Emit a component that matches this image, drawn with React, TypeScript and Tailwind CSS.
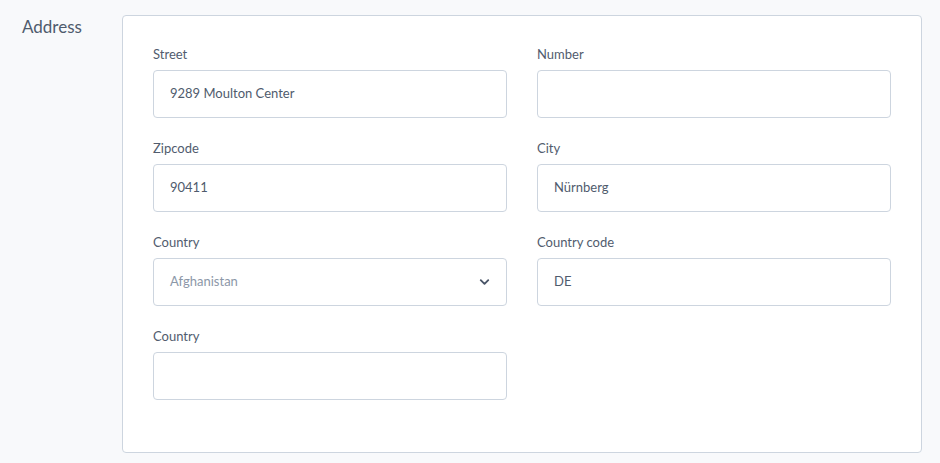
import { ChevronDown } from 'lucide-react';

function Field({ label, value, select }: { label: string; value?: string; select?: boolean }) {
  return (
    <div className="flex flex-col">
      <label className="h-5 text-[13px] leading-5 text-[#515c6e] mb-1.5">{label}</label>
      <div className="relative flex h-12 items-center rounded-[4px] border border-[#cdd5df] bg-white px-4">
        {select ? (
          <>
            <span className="text-[13px] text-[#8c97a8]">{value}</span>
            <ChevronDown className="absolute right-3.5 top-1/2 -translate-y-1/2 text-[#4a5568]" size={15} strokeWidth={3} />
          </>
        ) : (
          <span className="text-[13px] text-[#4f5b6d]">{value}</span>
        )}
      </div>
    </div>
  );
}

export default function App() {
  return (
    <div className="min-h-screen bg-[#f8f9fb] pt-[15px] pl-[22px] pr-[18px] font-['Lato','Noto_Sans',sans-serif]">
      <div className="flex">
        <h2 className="w-[100px] pt-[2px] text-[17px] leading-5 text-[#4f5b6d]">Address</h2>
        <div className="flex-1 rounded-[4px] border border-[#cdd5df] bg-white px-[30px] pt-[28px] pb-[52px]">
          <div className="grid grid-cols-2 gap-x-[30px] gap-y-5">
            <Field label="Street" value="9289 Moulton Center" />
            <Field label="Number" />
            <Field label="Zipcode" value="90411" />
            <Field label="City" value="Nürnberg" />
            <Field label="Country" value="Afghanistan" select />
            <Field label="Country code" value="DE" />
            <Field label="Country" />
          </div>
        </div>
      </div>
    </div>
  );
}
